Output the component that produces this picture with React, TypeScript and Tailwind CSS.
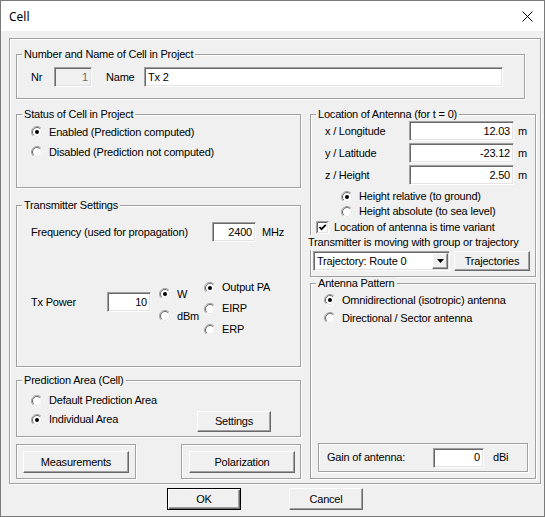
import type { ReactNode } from "react";

const FONT = "font-[family-name:'Liberation_Sans',Arial,sans-serif] text-[11px] leading-[13px] tracking-[-0.2px] text-black";

// etched group box with the caption sitting on its top line
function Group({ label, className = "", children }: { label?: string; className?: string; children?: ReactNode }) {
  return (
    <div className={`relative border border-[#a0a0a0] shadow-[inset_1px_1px_0_#fff,1px_1px_0_#fff] ${className}`}>
      {label && (
        <span className="absolute left-[5px] -top-[7px] bg-[#f0f0f0] px-[2px] whitespace-nowrap">{label}</span>
      )}
      {children}
    </div>
  );
}

function Field({ value, className = "", align = "right", disabled = false }: { value: string; className?: string; align?: "left" | "right"; disabled?: boolean }) {
  return (
    <div
      className={`flex h-[20px] items-center border border-t-[#a0a0a0] border-l-[#a0a0a0] border-r-white border-b-white px-[3px] shadow-[inset_1px_1px_0_#696969,inset_-1px_-1px_0_#e3e3e3] ${
        align === "right" ? "justify-end" : "justify-start"
      } ${disabled ? "bg-[#f0f0f0] text-[#6d6d6d]" : "bg-white"} ${className}`}
    >
      {value}
    </div>
  );
}

function Btn({ label, className = "", isDefault = false }: { label: string; className?: string; isDefault?: boolean }) {
  return (
    <button
      className={`flex items-center justify-center bg-[#f0f0f0] ${
        isDefault
          ? "border border-black shadow-[inset_1px_1px_0_#fff,inset_-1px_-1px_0_#696969,inset_-2px_-2px_0_#a0a0a0]"
          : "border border-t-white border-l-white border-r-[#696969] border-b-[#696969] shadow-[inset_-1px_-1px_0_#a0a0a0]"
      } ${className}`}
    >
      {label}
    </button>
  );
}

function Radio({ checked = false, label, className = "" }: { checked?: boolean; label: string; className?: string }) {
  return (
    <div className={`flex items-center gap-[6px] whitespace-nowrap ${className}`}>
      <svg width="12" height="12" viewBox="0 0 12 12" className="shrink-0">
        <circle cx="6" cy="6" r="5.5" fill="#fff" />
        <path d="M2.1 9.9 A5.5 5.5 0 0 1 9.9 2.1" stroke="#a0a0a0" fill="none" />
        <path d="M2.8 9.2 A4.5 4.5 0 0 1 9.2 2.8" stroke="#696969" fill="none" />
        <path d="M9.2 2.8 A4.5 4.5 0 0 1 2.8 9.2" stroke="#e3e3e3" fill="none" />
        {checked && <circle cx="6" cy="6" r="2" fill="#000" />}
      </svg>
      <span>{label}</span>
    </div>
  );
}

export default function App() {
  return (
    <div className={`${FONT} flex h-[517px] w-[545px] flex-col border border-[#7a7a7a] bg-[#f0f0f0]`}>
      {/* title bar */}
      <div className="flex h-[30px] shrink-0 items-center justify-between bg-white pl-[8px] pr-[11px]">
        <span className="font-[family-name:'Noto_Sans',sans-serif] text-[12px] tracking-normal">Cell</span>
        <svg width="11" height="11" viewBox="0 0 11 11">
          <path d="M0.5 0.5 L10.5 10.5 M10.5 0.5 L0.5 10.5" stroke="#000" strokeWidth="1" />
        </svg>
      </div>

      {/* outer frame */}
      <div className="ml-[8px] mt-[7px] flex h-[446px] w-[532px] flex-col border border-[#a0a0a0] shadow-[inset_1px_1px_0_#fff,1px_1px_0_#fff]">
        <Group label="Number and Name of Cell in Project" className="ml-[6px] mt-[15px] h-[45px] w-[509px] shrink-0">
          <div className="mt-[12px] flex h-[20px] items-center pl-[14px]">
            <span className="w-[23px]">Nr</span>
            <Field value="1" disabled className="w-[38px]" />
            <span className="ml-[14px] w-[38px]">Name</span>
            <Field value="Tx 2" align="left" className="w-[359px]" />
          </div>
        </Group>

        <div className="ml-[6px] mt-[15px] flex gap-[9px]">
          {/* left column */}
          <div className="flex w-[285px] flex-col">
            <Group label="Status of Cell in Project" className="h-[74px]">
              <div className="pl-[14px] pt-[7px]">
                <Radio checked label="Enabled (Prediction computed)" className="h-[20px]" />
                <Radio label="Disabled (Prediction not computed)" className="h-[20px]" />
              </div>
            </Group>

            <Group label="Transmitter Settings" className="mt-[17px] h-[162px]">
              <div className="mt-[16px] flex h-[20px] items-center pl-[14px]">
                <span className="w-[181px]">Frequency (used for propagation)</span>
                <Field value="2400" className="w-[44px]" />
                <span className="ml-[6px]">MHz</span>
              </div>
              <div className="mt-[35px] flex pl-[14px]">
                <div className="mt-[15px] flex h-[20px] items-center">
                  <span className="w-[76px]">Tx Power</span>
                  <Field value="10" className="w-[44px]" />
                </div>
                <div className="ml-[8px] mt-[6px] w-[45px]">
                  <Radio checked label="W" className="h-[22px]" />
                  <Radio label="dBm" className="h-[22px]" />
                </div>
                <div>
                  <Radio checked label="Output PA" className="h-[21px]" />
                  <Radio label="EIRP" className="h-[21px]" />
                  <Radio label="ERP" className="h-[21px]" />
                </div>
              </div>
            </Group>

            <Group label="Prediction Area (Cell)" className="mt-[13px] h-[57px]">
              <div className="pl-[14px] pt-[10px]">
                <Radio label="Default Prediction Area" className="h-[19px]" />
                <div className="flex items-start">
                  <Radio checked label="Individual Area" className="h-[19px] w-[166px]" />
                  <Btn label="Settings" className="mt-[1px] h-[21px] w-[74px]" />
                </div>
              </div>
            </Group>

            <div className="mt-[7px] flex h-[35px] justify-between">
              <Group className="w-[120px] pl-[6px] pt-[6px]">
                <Btn label="Measurements" className="h-[22px] w-[106px]" />
              </Group>
              <Group className="w-[120px] pl-[7px] pt-[6px]">
                <Btn label="Polarization" className="h-[22px] w-[106px]" />
              </Group>
            </div>
          </div>

          {/* right column */}
          <div className="flex w-[226px] flex-col">
            <Group label="Location of Antenna (for t = 0)" className="h-[163px]">
              <div className="flex flex-col gap-[2px] pl-[14px] pt-[6px]">
                {[
                  ["x / Longitude", "12.03"],
                  ["y / Latitude", "-23.12"],
                  ["z / Height", "2.50"],
                ].map(([l, v]) => (
                  <div key={l} className="flex h-[20px] items-center">
                    <span className="w-[84px]">{l}</span>
                    <Field value={v} className="w-[105px]" />
                    <span className="ml-[4px]">m</span>
                  </div>
                ))}
              </div>
              <div className="mt-[4px] pl-[30px]">
                <Radio checked label="Height relative (to ground)" className="h-[15px]" />
                <Radio label="Height absolute (to sea level)" className="h-[15px]" />
              </div>
              <div className="mt-[2px] flex h-[13px] items-center gap-[5px] pl-[5px]">
                <svg width="13" height="13" viewBox="0 0 13 13" className="shrink-0">
                  <rect x="0" y="0" width="13" height="13" fill="#fff" />
                  <path d="M0.5 12.5 V0.5 H12.5" stroke="#a0a0a0" fill="none" />
                  <path d="M1.5 11.5 V1.5 H11.5" stroke="#696969" fill="none" />
                  <path d="M1.5 11.5 H11.5 V1.5" stroke="#e3e3e3" fill="none" />
                  <path d="M3.5 6 L5.5 8.2 L9.8 3.8" stroke="#000" strokeWidth="1.8" fill="none" />
                </svg>
                <span>Location of antenna is time variant</span>
              </div>
              <div className="relative -ml-[4px] mt-[1px] w-fit whitespace-nowrap bg-[#f0f0f0] py-[1px] pl-[1px]">
                Transmitter is moving with group or trajectory
              </div>
              <div className="mt-[1px] flex items-center pl-[2px]">
                <div className="flex h-[20px] w-[137px] items-center border border-t-[#a0a0a0] border-l-[#a0a0a0] border-r-white border-b-white bg-white pl-[3px] pr-[1px] shadow-[inset_1px_1px_0_#696969,inset_-1px_-1px_0_#e3e3e3]">
                  <span className="flex-1">Trajectory: Route 0</span>
                  <div className="flex h-[16px] w-[16px] items-center justify-center border border-t-white border-l-white border-r-[#696969] border-b-[#696969] bg-[#f0f0f0] shadow-[inset_-1px_-1px_0_#a0a0a0]">
                    <svg width="7" height="4" viewBox="0 0 7 4">
                      <path d="M0 0 H7 L3.5 4 Z" fill="#000" />
                    </svg>
                  </div>
                </div>
                <Btn label="Trajectories" className="ml-[4px] h-[20px] w-[76px]" />
              </div>
            </Group>

            <Group label="Antenna Pattern" className="mt-[6px] flex h-[196px] flex-col">
              <div className="pl-[13px] pt-[7px]">
                <Radio checked label="Omnidirectional (isotropic) antenna" className="h-[18px]" />
                <Radio label="Directional / Sector antenna" className="h-[18px]" />
              </div>
              <Group className="mb-[6px] ml-[7px] mt-auto flex h-[29px] w-[210px] items-center pl-[8px]">
                <span className="w-[106px]">Gain of antenna:</span>
                <Field value="0" className="w-[51px]" />
                <span className="ml-[9px]">dBi</span>
              </Group>
            </Group>
          </div>
        </div>
      </div>

      {/* dialog buttons */}
      <div className="ml-[166px] mt-[4px] flex gap-[48px]">
        <Btn label="OK" isDefault className="h-[22px] w-[74px]" />
        <Btn label="Cancel" className="h-[22px] w-[74px]" />
      </div>
    </div>
  );
}
